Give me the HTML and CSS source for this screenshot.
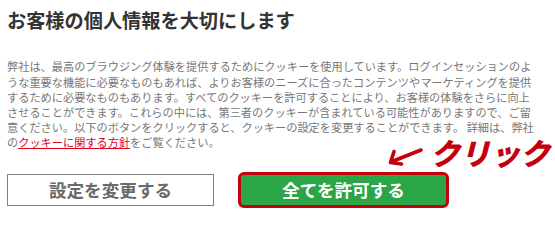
FILE: index.html
```html
<!DOCTYPE html>
<html lang="ja">
<head>
<meta charset="utf-8">
<link rel="stylesheet" href="styles.css">
</head>
<body>
<div class="consent">
  <h1 class="title">お客様の個人情報を大切にします</h1>
  <p class="desc">弊社は、最高のブラウジング体験を提供するためにクッキーを使用しています。ログインセッションのような重要な機能に必要なものもあれば、よりお客様のニーズに合ったコンテンツやマーケティングを提供するために必要なものもあります。すべてのクッキーを許可することにより、お客様の体験をさらに向上させることができます。これらの中には、第三者のクッキーが含まれている可能性がありますので、ご留意ください。以下のボタンをクリックすると、クッキーの設定を変更することができます。 詳細は、弊社の<a class="policy" href="#">クッキーに関する方針</a>をご覧ください。</p>
  <div class="actions">
    <button class="btn btn-settings">設定を変更する</button>
    <button class="btn btn-accept">全てを許可する</button>
  </div>
  <div class="annotation">
    <svg class="arrow" width="40" height="24" viewBox="0 0 40 24">
      <path d="M35 5 L6 16.5" stroke="#c4000c" stroke-width="3.6" fill="none" stroke-linecap="round"/>
      <path d="M8 6.5 L4.5 17.5 L15.5 19" stroke="#c4000c" stroke-width="3.6" fill="none" stroke-linecap="round" stroke-linejoin="round"/>
    </svg>
    <span class="click">クリック</span>
  </div>
</div>
</body>
</html>
```

FILE: styles.css
```css
html, body {
  margin: 0;
  padding: 0;
  background: #ffffff;
}
body {
  font-family: "Noto Sans CJK JP", "Noto Sans", sans-serif;
}
.consent {
  position: relative;
  width: 531px;
  padding: 8px 0 0 7px;
}
.title {
  margin: 0;
  font-size: 19.2px;
  line-height: 24px;
  font-weight: 700;
  color: #333333;
}
.desc {
  margin: 27.4px 0 0 0;
  font-size: 11.2px;
  line-height: 15.2px;
  color: #777777;
}
.policy {
  color: #e2001a;
  text-decoration: underline;
}
.actions {
  display: flex;
  align-items: center;
  gap: 24px;
  margin-top: 21.4px;
}
.btn {
  font-family: "Noto Sans CJK JP", "Noto Sans", sans-serif;
  font-size: 17.6px;
  font-weight: 700;
  line-height: 1;
  padding: 0;
  cursor: pointer;
}
.btn-settings {
  width: 207px;
  height: 32px;
  background: #ffffff;
  color: #6a6a6a;
  border: 1.5px solid #808080;
}
.btn-accept {
  width: 211px;
  height: 36px;
  background: #2aa646;
  color: #ffffff;
  border: 3px solid #c4000c;
  border-radius: 6px;
}
.annotation {
  position: absolute;
  left: 386px;
  top: 135px;
  display: flex;
  align-items: center;
}
.arrow {
  display: block;
  margin-top: 10px;
}
.click {
  margin-left: 4px;
  font-size: 30px;
  line-height: 28px;
  font-weight: 900;
  font-style: italic;
  color: #c4000c;
  white-space: nowrap;
}
```
